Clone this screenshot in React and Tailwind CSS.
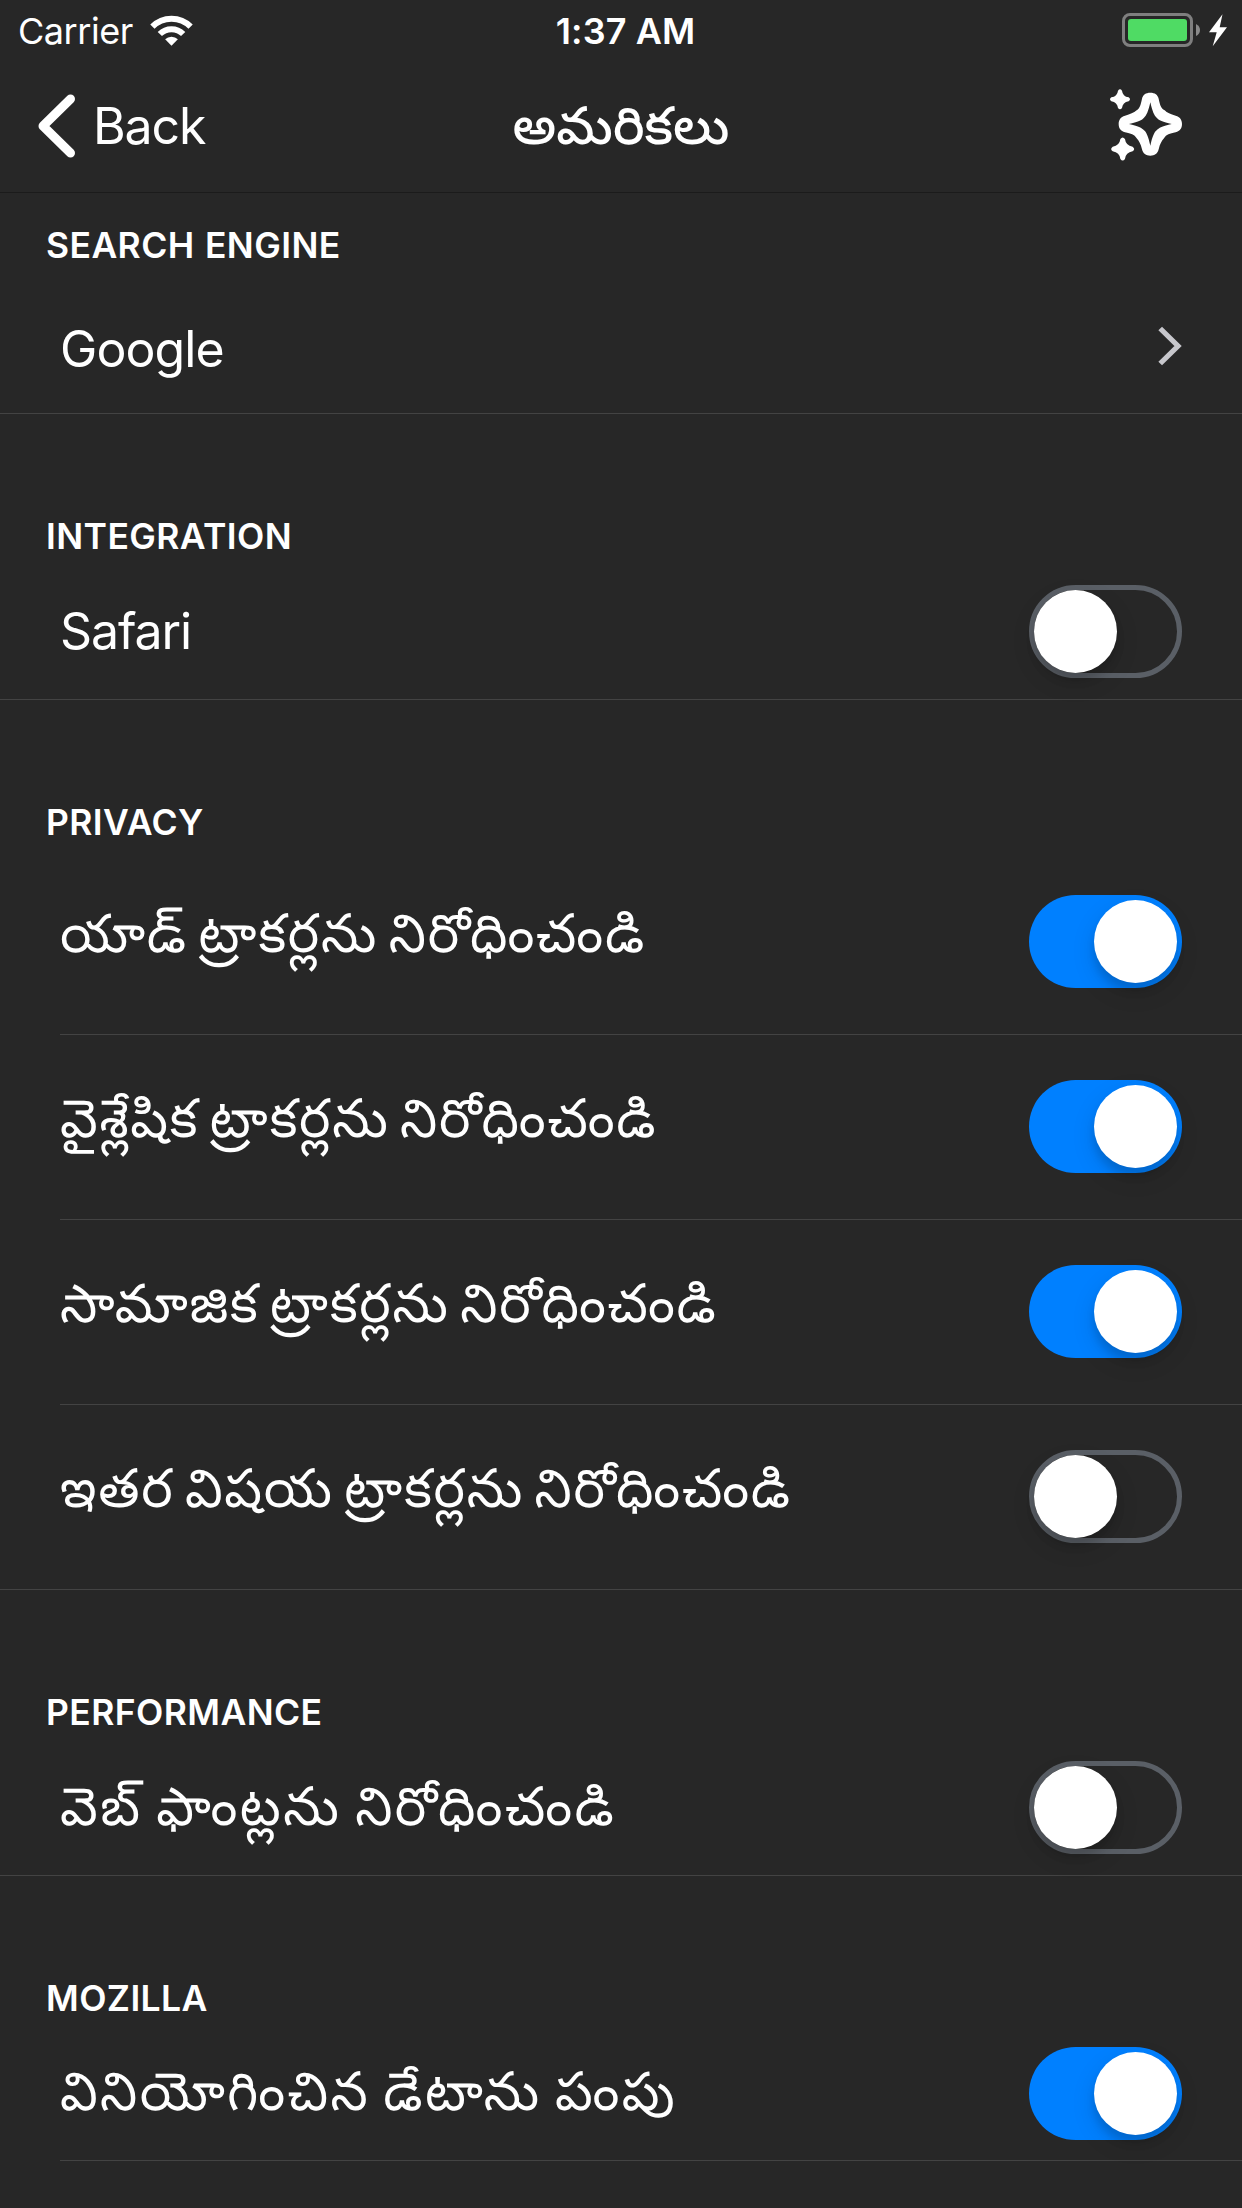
function Toggle({ on }) {
  return (
    <div
      className={
        on
          ? "flex h-[93px] w-[153px] shrink-0 items-center justify-end rounded-full bg-[#0080ff] p-[5px]"
          : "flex h-[93px] w-[153px] shrink-0 items-center rounded-full border-[5px] border-[#5a5f66]"
      }
    >
      <div className="size-[83px] rounded-full bg-white shadow-[0_8px_8px_rgba(0,0,0,0.12),0_9px_24px_rgba(0,0,0,0.12)]" />
    </div>
  );
}

function Chevron() {
  return (
    <svg className="h-10 w-6" viewBox="0 0 24 40" fill="none">
      <path d="M2.2 2.5 L20 20 L2.2 37.5" stroke="#c7c7cc" strokeWidth="5.2" />
    </svg>
  );
}

function Row({ label, className, labelClass, children }) {
  return (
    <div className={"flex items-center justify-between pr-[60px] " + className}>
      <span className={"whitespace-nowrap leading-[60px] " + labelClass}>{label}</span>
      {children}
    </div>
  );
}

function Heading({ children, className = "h-[150px] pt-[101px]" }) {
  return (
    <h2 className={"pl-[46px] text-[35.5px] font-semibold leading-[44px] tracking-[0.4px] [word-spacing:1px] " + className}>
      {children}
    </h2>
  );
}

const trackers = [
  ["యాడ్ ట్రాకర్లను నిరోధించండి", true],
  ["వైశ్లేషిక ట్రాకర్లను నిరోధించండి", true],
  ["సామాజిక ట్రాకర్లను నిరోధించండి", true],
  ["ఇతర విషయ ట్రాకర్లను నిరోధించండి", false],
];

export default function App() {
  return (
    <div className="h-[2208px] w-[1242px] overflow-hidden bg-[#272727] font-['Inter','Noto_Sans_Telugu',sans-serif] text-white">
      <div className="grid h-[60px] grid-cols-3 items-center pl-[18px] pr-[15px]">
        <div className="flex items-center gap-[17px]">
          <span className="pt-[2px] text-[36px] leading-[44px] tracking-[-0.45px]">Carrier</span>
          <svg className="h-[31px] w-[43px]" viewBox="0 0 129 93" fill="none" stroke="#fff" strokeWidth="18">
            <path d="M7.2 34.7 A81 81 0 0 1 121.8 34.7" />
            <path d="M29.5 57 A49.5 49.5 0 0 1 99.5 57" />
            <path d="M64.5 92 L45.4 73 A27 27 0 0 1 83.6 73 Z" fill="#fff" stroke="none" />
          </svg>
        </div>
        <span className="pl-[6px] pt-[2px] text-center text-[36px] font-semibold leading-[44px] tracking-[0.1px]">1:37 AM</span>
        <svg className="h-[34px] w-[105px] justify-self-end" viewBox="0 0 105 34">
          <rect x="1.5" y="1.5" width="68" height="31" rx="6.5" fill="none" stroke="#7f7f7f" strokeWidth="3" />
          <rect x="6" y="6" width="59" height="22" rx="3" fill="#4fdb64" />
          <path d="M74 11 Q78 13 78 17 Q78 21 74 23 Z" fill="#8a8a8a" />
          <path d="M100.5 1.3 L87 19.3 H94.7 L90.7 33.3 L105 14.3 H97.7 Z" fill="#fff" />
        </svg>
      </div>
      <div className="grid h-[133px] grid-cols-3 items-center border-b border-[#1b1b1b]">
        <div className="flex items-center gap-[18px] pl-[35px]">
          <svg className="h-[64px] w-[40px]" viewBox="0 0 40 64" fill="none">
            <path d="M35.5 5 L8 32 L35.5 59" stroke="#fff" strokeWidth="9" strokeLinecap="round" strokeLinejoin="round" />
          </svg>
          <span className="text-[50px] leading-[60px] tracking-[-1.1px]">Back</span>
        </div>
        <h1 className="whitespace-nowrap pb-[3px] text-center text-[52.5px] font-medium leading-[60px]">అమరికలు</h1>
        <svg className="mb-[3px] mr-[60px] h-[72px] w-[72px] justify-self-end" viewBox="0 0 216 216" fill="#fff">
          <path
            transform="translate(121 105)"
            fillRule="evenodd"
            d="M0 -94 C14 -94 22 -88 25 -76 C29 -58 31 -48 43 -41 C50 -34 60 -29 76 -25 C89 -21 95 -13 95 0 C95 13 89 21 76 25 C58 29 48 31 41 43 C34 50 29 60 25 76 C22 89 13 95 0 95 C-13 95 -22 89 -25 76 C-29 60 -34 50 -41 43 C-48 31 -58 29 -76 25 C-89 21 -95 13 -95 0 C-95 -13 -89 -21 -76 -25 C-60 -29 -50 -34 -41 -41 C-31 -48 -29 -58 -25 -76 C-22 -88 -14 -94 0 -94 Z M0 -65 C-6 -38 -12 -24 -19 -19 C-24 -12 -38 -6 -64 0 C-38 6 -24 12 -19 19 C-12 24 -6 38 0 65 C6 38 12 24 19 19 C24 12 38 6 64 0 C38 -6 24 -12 19 -19 C12 -24 6 -38 0 -65 Z"
          />
          <path transform="translate(30 31)" d="M-6 -26 Q0 -34 6 -26 Q8 -9 26 -6 Q34 0 26 6 Q8 9 6 26 Q0 34 -6 26 Q-8 9 -26 6 Q-34 0 -26 -6 Q-8 -9 -6 -26 Z" />
          <path transform="translate(38 180) scale(1.15)" d="M-6 -26 Q0 -34 6 -26 Q8 -9 26 -6 Q34 0 26 6 Q8 9 6 26 Q0 34 -6 26 Q-8 9 -26 6 Q-34 0 -26 -6 Q-8 -9 -6 -26 Z" />
        </svg>
      </div>

      <Heading className="h-[86px] pt-[31px]">SEARCH ENGINE</Heading>
      <Row
        label="Google"
        className="h-[135px] border-b border-[#434343] pl-[60px]"
        labelClass="pt-[6px] text-[50px] tracking-[-0.9px]"
      >
        <Chevron />
      </Row>

      <Heading>INTEGRATION</Heading>
      <Row
        label="Safari"
        className="h-[136px] border-b border-[#434343] pl-[60px]"
        labelClass="pb-[2px] text-[50px] tracking-[-1.1px]"
      >
        <Toggle />
      </Row>

      <Heading>PRIVACY</Heading>
      {trackers.map(([label, on], i) => (
        <Row
          key={label}
          label={label}
          className={
            i < 3
              ? "ml-[60px] h-[185px] border-b border-[#434343] pb-px"
              : "h-[185px] border-b border-[#434343] pb-px pl-[60px]"
          }
          labelClass="pb-[18px] text-[53px] tracking-[1.7px] [word-spacing:-6px]"
        >
          <Toggle on={on} />
        </Row>
      ))}

      <Heading>PERFORMANCE</Heading>
      <Row
        label="వెబ్ ఫాంట్లను నిరోధించండి"
        className="h-[136px] border-b border-[#434343] pl-[60px]"
        labelClass="pb-[4px] text-[53px] tracking-[2.5px] [word-spacing:-3.5px]"
      >
        <Toggle />
      </Row>

      <Heading>MOZILLA</Heading>
      <Row
        label="వినియోగించిన డేటాను పంపు"
        className="ml-[60px] h-[135px] border-b border-[#434343]"
        labelClass="pb-[4px] text-[53px] tracking-[2.4px] [word-spacing:-4px]"
      >
        <Toggle on />
      </Row>
    </div>
  );
}
